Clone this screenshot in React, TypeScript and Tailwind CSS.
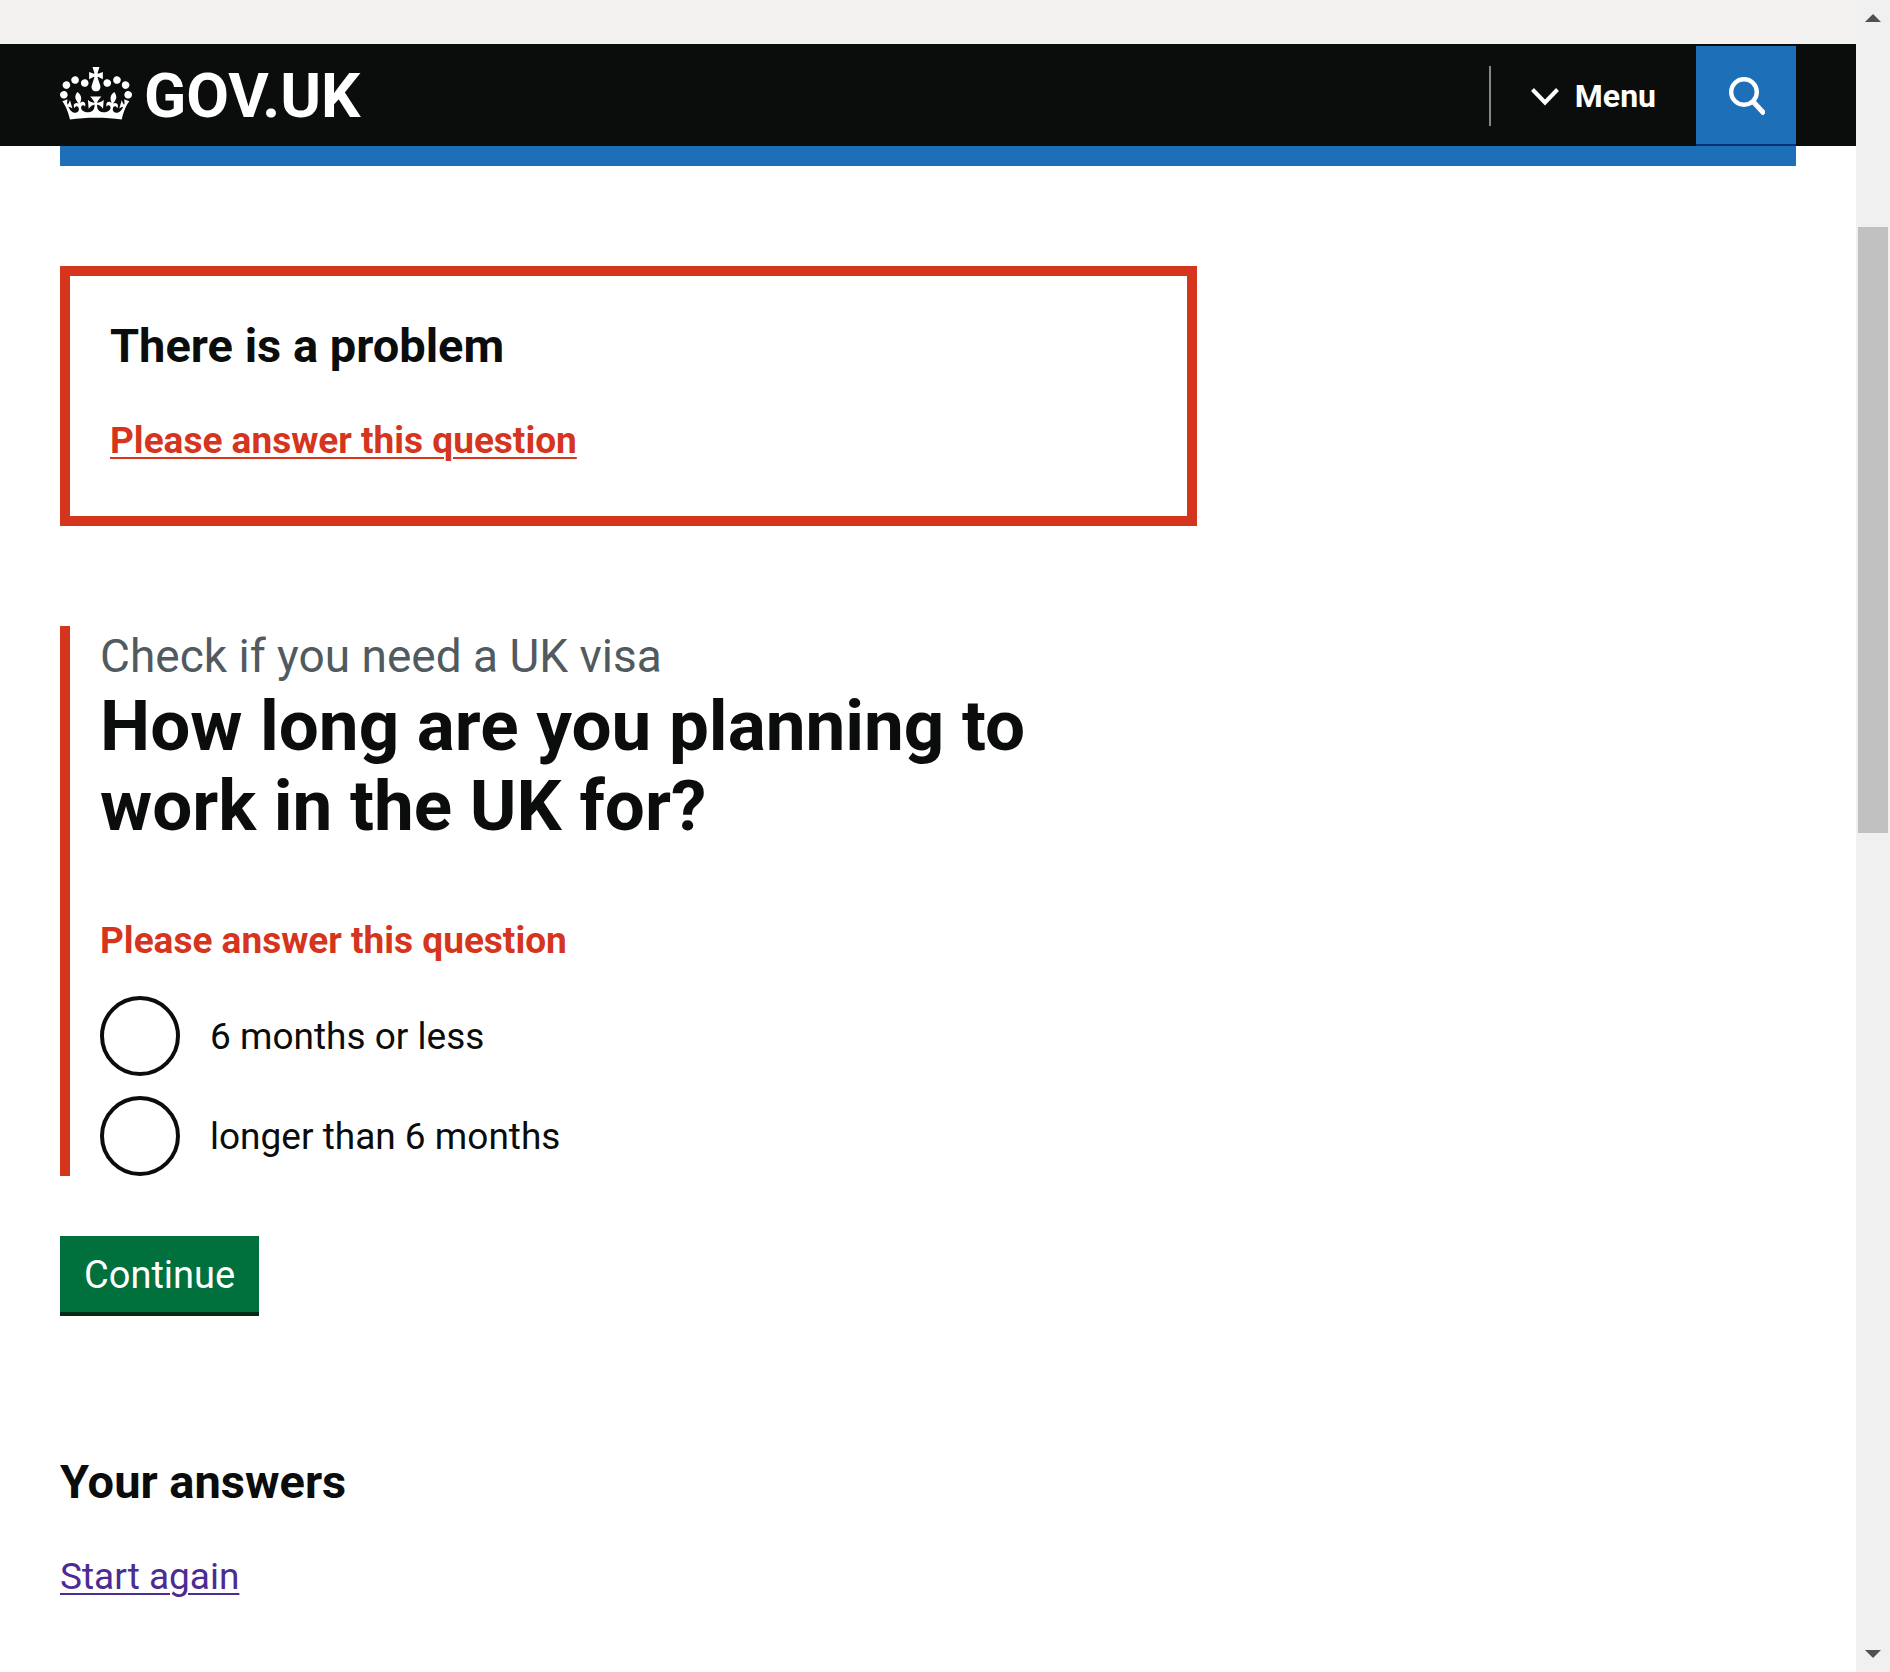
import React from "react";

const CROWN_PATH =
  "M25 30.2c3.5 1.5 7.7-.2 9.1-3.7 1.5-3.6-.2-7.8-3.9-9.2-3.6-1.4-7.6.3-9.1 3.9-1.4 3.5.3 7.5 3.9 9zM9 39.5c3.6 1.5 7.8-.2 9.2-3.7 1.5-3.6-.2-7.8-3.9-9.1-3.6-1.5-7.6.2-9.1 3.8-1.4 3.5.3 7.5 3.8 9zM4.4 57.2c3.5 1.5 7.7-.2 9.1-3.8 1.5-3.6-.2-7.7-3.9-9.1-3.5-1.5-7.6.3-9.1 3.8-1.4 3.5.3 7.6 3.9 9.1zm38.3-21.4c3.5 1.5 7.7-.2 9.1-3.8 1.5-3.6-.2-7.7-3.9-9.1-3.6-1.5-7.6.3-9.1 3.8-1.3 3.6.4 7.7 3.9 9.1zm64.4-5.6c-3.6 1.5-7.8-.2-9.1-3.7-1.5-3.6.2-7.8 3.8-9.2 3.6-1.4 7.7.3 9.2 3.9 1.3 3.5-.4 7.5-3.9 9zm15.9 9.3c-3.6 1.5-7.7-.2-9.1-3.7-1.5-3.6.2-7.8 3.7-9.1 3.6-1.5 7.7.2 9.2 3.8 1.5 3.5-.3 7.5-3.8 9zm4.7 17.7c-3.6 1.5-7.8-.2-9.2-3.8-1.5-3.6.2-7.7 3.9-9.1 3.6-1.5 7.7.3 9.2 3.8 1.3 3.5-.4 7.6-3.9 9.1zM89.3 35.8c-3.6 1.5-7.8-.2-9.2-3.8-1.4-3.6.2-7.7 3.9-9.1 3.6-1.5 7.7.3 9.2 3.8 1.4 3.6-.3 7.7-3.9 9.1zM69.7 17.7l8.9 4.7V9.3l-8.9 2.8c-.2-.3-.5-.6-.9-.9L72.4 0H59.6l3.5 11.2c-.3.3-.6.5-.9.9l-8.8-2.8v13.1l8.8-4.7c.3.3.6.7.9.9l-5 15.4v.1c-.2.8-.4 1.6-.4 2.4 0 4.1 3.1 7.5 7 8.1h.2c.3 0 .7.1 1 .1.4 0 .7 0 1-.1h.2c4-.6 7.1-4.1 7.1-8.1 0-.8-.1-1.7-.4-2.4V34l-5.1-15.4c.4-.2.7-.6 1-.9zM66 92.8c16.9 0 32.8 1.1 47.1 3.2 4-16.9 8.9-26.7 14-33.5l-9.6-3.4c1 4.9 1.1 7.2 0 10.2-1.5-1.4-3-4.3-4.2-8.7L108.6 76c2.8-2 5-3.2 7.5-3.3-4.4 9.4-10 11.9-13.6 11.2-4.3-.8-6.3-4.6-5.6-7.9 1-4.7 5.7-5.9 8-.5 4.3-8.7-3-11.4-7.6-8.8 7.1-7.2 7.9-13.5 2.1-21.1-8 6.1-8.1 12.3-4.5 20.8-4.7-5.4-12.1-2.5-9.5 6.2 3.4-5.2 7.9-2 7.2 3.1-.6 4.3-6.4 7.8-13.5 7.2-10.3-.9-10.9-8-11.2-13.8 2.5-.5 7.1 1.8 11 7.3L80.2 60c-4.1 4.4-8 5.3-12.3 5.4 1.4-4.4 8-11.6 8-11.6H55.5s6.4 7.2 7.9 11.6c-4.2-.1-8-1-12.3-5.4l1.4 16.4c3.9-5.5 8.5-7.7 10.9-7.3-.3 5.8-.9 12.8-11.1 13.8-7.2.6-12.9-2.9-13.5-7.2-.7-5 3.8-8.3 7.1-3.1 2.7-8.7-4.6-11.6-9.4-6.2 3.7-8.5 3.6-14.7-4.6-20.8-5.8 7.6-5 13.9 2.2 21.1-4.7-2.6-11.9.1-7.7 8.8 2.3-5.5 7.1-4.2 8.1.5.7 3.3-1.3 7.1-5.7 7.9-3.5.7-9-1.8-13.5-11.2 2.5.1 4.7 1.3 7.5 3.3l-4.7-15.4c-1.2 4.4-2.7 7.2-4.3 8.7-1.1-3-.9-5.3 0-10.2l-9.5 3.4c5 6.9 9.9 16.7 14 33.5 14.8-2.1 30.8-3.2 47.7-3.2z";

function Header() {
  return (
    <header className="bg-[#0b0c0c] px-[60px] text-white">
      <div className="flex h-[102px] items-center justify-between">
        <a href="#home" aria-label="GOV.UK home" className="flex items-center gap-3">
          <svg viewBox="0 0 132 97" className="mb-1 h-[53px] w-[72px]" fill="currentColor" aria-hidden="true">
            <path fillRule="evenodd" d={CROWN_PATH} />
          </svg>
          <span className="pt-0.5 text-[62px] leading-[60px] font-bold">GOV.UK</span>
        </a>
        <div className="flex h-full items-center">
          <button type="button" className="mt-0.5 flex h-[60px] items-center border-l-2 border-[#858686] px-10 text-[32px] leading-[60px] font-bold">
            <svg viewBox="0 0 28 18" className="mt-0.5 mr-4 h-[18px] w-7" fill="none" stroke="currentColor" strokeWidth="4" aria-hidden="true">
              <path d="M1.5 1.5L14 14.5L26.5 1.5" />
            </svg>
            Menu
          </button>
          <button
            type="button"
            aria-label="Search GOV.UK"
            className="flex h-full w-[100px] items-center justify-center border-t-2 border-b-2 border-t-[#0b0c0c] border-b-[#003078] bg-[#1d70b8]"
          >
            <svg viewBox="0 0 38 40" className="h-10 w-[38px]" fill="none" stroke="currentColor" aria-hidden="true">
              <circle cx="17" cy="17" r="12.8" strokeWidth="4.4" />
              <path d="M26 26.5L37.5 39" strokeWidth="5" />
            </svg>
          </button>
        </div>
      </div>
    </header>
  );
}

function ErrorSummary() {
  return (
    <div role="alert" className="border-10 border-[#d4351c] p-10 pb-[50px]">
      <h2 className="text-[47px] leading-[60px] font-bold">There is a problem</h2>
      <a
        href="#months-0"
        className="mt-10 inline-block align-top text-[37px] leading-[50px] font-bold text-[#d4351c] underline decoration-2 underline-offset-4"
      >
        Please answer this question
      </a>
    </div>
  );
}

function RadioOption({ id, label }: { id: string; label: string }) {
  return (
    <div className="flex items-center">
      <input
        id={id}
        type="radio"
        name="length-of-stay"
        className="size-20 shrink-0 appearance-none rounded-full border-4 border-[#0b0c0c] bg-white checked:bg-[radial-gradient(#0b0c0c_50%,transparent_51%)]"
      />
      <label htmlFor={id} className="pt-0.5 pl-[30px] text-[37px] leading-[50px]">
        {label}
      </label>
    </div>
  );
}

function Question() {
  return (
    <fieldset className="mt-[100px] border-l-10 border-[#d4351c] pl-[30px]">
      <legend className="float-left w-full pb-[70px]">
        <span className="block text-[46px] leading-[60px] text-[#505a5f]">Check if you need a UK visa</span>
        <h1 className="text-[71px] leading-[80px] font-bold">How long are you planning to work in the UK for?</h1>
      </legend>
      <p className="clear-both text-[37px] leading-[50px] font-bold text-[#d4351c]">Please answer this question</p>
      <div className="mt-[30px] flex flex-col gap-5">
        <RadioOption id="months-0" label="6 months or less" />
        <RadioOption id="months-1" label="longer than 6 months" />
      </div>
    </fieldset>
  );
}

function Scrollbar() {
  return (
    <div aria-hidden="true" className="flex h-screen w-[34px] shrink-0 flex-col items-center bg-[#f0f0f0] py-[14px] text-[#505050]">
      <svg viewBox="0 0 16 8" className="h-2 w-4" fill="currentColor">
        <path d="M0 8L8 0L16 8z" />
      </svg>
      <div className="mt-[205px] h-[606px] w-[30px] bg-[#c1c1c1]" />
      <svg viewBox="0 0 16 8" className="mt-auto h-2 w-4" fill="currentColor">
        <path d="M0 0L8 8L16 0z" />
      </svg>
    </div>
  );
}

export default function App() {
  return (
    <div className="flex min-h-screen bg-white font-['Roboto',sans-serif] text-[#0b0c0c]">
      <div className="min-w-0 flex-1">
        <div className="h-11 bg-[#f3f2f1]" />
        <Header />
        <div className="px-[60px]">
          <div className="h-5 bg-[#1d70b8]" />
          <main className="pt-[100px]">
            <div className="w-2/3 pr-5">
              <ErrorSummary />
              <form onSubmit={(event: React.FormEvent) => event.preventDefault()}>
                <Question />
                <button
                  type="submit"
                  className="mt-[60px] h-20 border-b-4 border-[#002d18] bg-[#00703c] px-6 pt-0.5 text-[38px] leading-[50px] text-white"
                >
                  Continue
                </button>
              </form>
              <h2 className="mt-[136px] text-[47px] leading-[60px] font-bold">Your answers</h2>
              <a
                href="#start"
                className="mt-10 inline-block text-[37px] leading-[50px] text-[#4c2c92] underline decoration-2 underline-offset-4"
              >
                Start again
              </a>
            </div>
          </main>
        </div>
      </div>
      <Scrollbar />
    </div>
  );
}
